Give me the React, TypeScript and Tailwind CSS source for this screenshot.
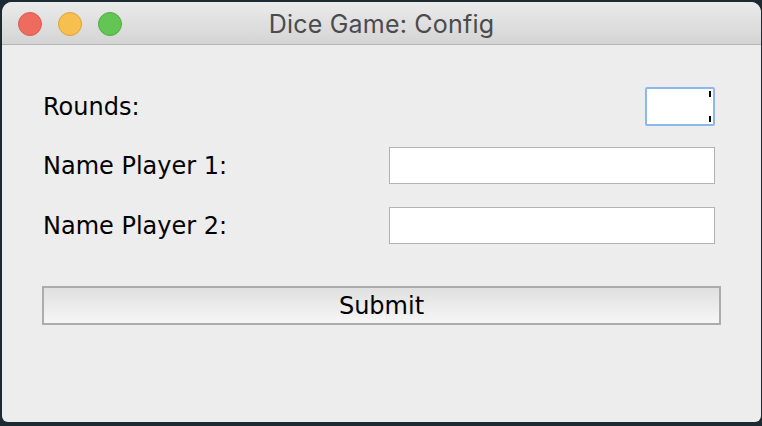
const labelFont = { fontFamily: '"DejaVu Sans", "Liberation Sans", sans-serif' }

type FieldRowProps = {
    label: string
    className: string
}

const FieldRow = ({ label, className }: FieldRowProps) => (
    <div className={`flex items-center justify-between ${className}`}>
        <span className="ml-[1px] text-[24px] leading-none text-black">{label}</span>
        <div className="mr-[6px] h-[37px] w-[326px] border border-[#b3b3b3] bg-white" />
    </div>
)

export default function App() {
    return (
        <div className="h-[426px] w-[762px] overflow-hidden bg-[#1c2a31] pl-[2px] pt-[2px]">
            <div className="flex h-[420px] w-[759px] flex-col overflow-hidden rounded-t-[10px] rounded-b-[6px] bg-[#ededed]">
                {/* title bar */}
                <div className="relative flex h-[43px] shrink-0 items-center border-b border-[#b4b4b4] bg-gradient-to-b from-[#ebebeb] to-[#d4d4d4] pt-[2px]">
                    <div className="flex gap-[16px] pl-[16px]">
                        <span className="h-[24px] w-[24px] rounded-full border border-[#dd5a50] bg-[#ee6b60]" />
                        <span className="h-[24px] w-[24px] rounded-full border border-[#dea437] bg-[#f6bf4f]" />
                        <span className="h-[24px] w-[24px] rounded-full border border-[#52ab42] bg-[#62c554]" />
                    </div>
                    <span
                        className="absolute inset-x-0 top-[10px] text-center text-[25px] leading-none tracking-[0.2px] text-[#4b4b4b]"
                        style={{ fontFamily: 'Inter, "Liberation Sans", sans-serif' }}
                    >
                        Dice Game: Config
                    </span>
                </div>

                <div className="flex flex-col px-[40px]" style={labelFont}>
                    <div className="mt-[42px] flex h-[39px] items-center justify-between">
                        <span className="ml-[1px] text-[24px] leading-none text-black">Rounds:</span>
                        <div className="relative mr-[6px] h-[39px] w-[70px] rounded-[2px] border-2 border-[#8db8ee] bg-white">
                            <span className="absolute right-[2px] top-[2px] h-[6px] w-[2px] bg-black" />
                            <span className="absolute bottom-[2px] right-[2px] h-[6px] w-[2px] bg-black" />
                        </div>
                    </div>
                    <FieldRow label="Name Player 1:" className="mt-[21px] h-[37px]" />
                    <FieldRow label="Name Player 2:" className="mt-[23px] h-[37px]" />
                    <button className="mt-[42px] h-[39px] w-full border-2 border-[#acacac] bg-gradient-to-b from-[#e0e0e0] to-[#f6f6f6] text-[24px] leading-none text-black">
                        Submit
                    </button>
                </div>
            </div>
        </div>
    )
}
